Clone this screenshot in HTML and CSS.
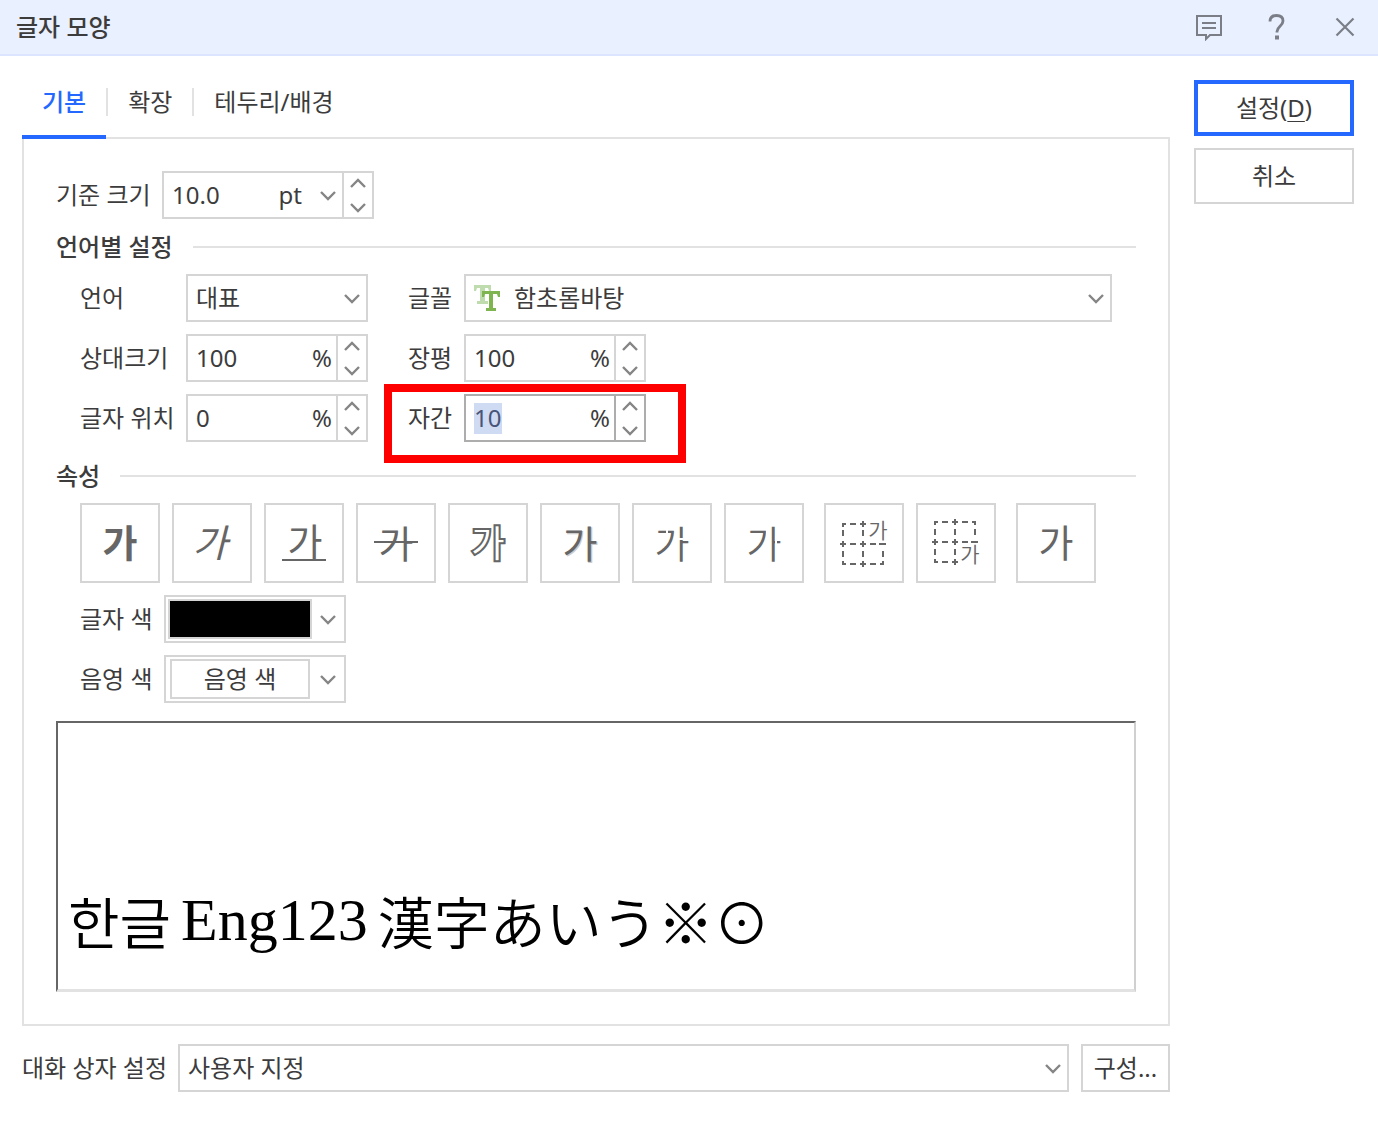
FILE: index.html
```html
<!DOCTYPE html>
<html lang="ko">
<head>
<meta charset="utf-8">
<meta name="viewport" content="width=device-width, initial-scale=1">
<title>글자 모양</title>
<link rel="stylesheet" href="styles.css">
</head>
<body>
<svg class="defs" aria-hidden="true">
  <symbol id="up" viewBox="0 0 18 12"><path d="M2 10 9 3l7 7" fill="none" stroke="#858585" stroke-width="2.4"/></symbol>
  <symbol id="down" viewBox="0 0 18 12"><path d="M2 3l7 7 7-7" fill="none" stroke="#858585" stroke-width="2.4"/></symbol>
</svg>

<header class="titlebar">
  <h1 class="title">글자 모양</h1>
  <div class="title-tools">
    <button class="tool" type="button" aria-label="의견">
      <svg width="28" height="28" viewBox="0 0 28 28" fill="none" stroke="#7b7e87" stroke-width="2"><path d="M2 3h24v19H15l-4 4v-4H2zM7 10h14M7 15h14"/></svg>
    </button>
    <button class="tool" type="button" aria-label="도움말">
      <svg width="28" height="28" viewBox="0 0 28 28" fill="none" stroke="#7b7e87" stroke-width="2.800"><path d="M7 8.500C7 4.500 9.500 2.500 13.500 2.500s6.500 2 6.500 5.500c0 5-6 5.500-6 10.500v1"/><path d="M12 24.500h4" stroke-width="4"/></svg>
    </button>
    <button class="tool" type="button" aria-label="닫기">
      <svg width="28" height="28" viewBox="0 0 28 28" fill="none" stroke="#7b7e87" stroke-width="2.200"><path d="M5.500 5.500l17 17m0-17l-17 17"/></svg>
    </button>
  </div>
</header>

<form class="dialog">
  <main class="main">
    <div class="tabs" role="tablist">
      <button class="tab active" type="button" role="tab" aria-selected="true">기본</button>
      <button class="tab" type="button" role="tab">확장</button>
      <button class="tab" type="button" role="tab">테두리/배경</button>
    </div>

    <section class="panel">
      <div class="size-row">
        <label for="size">기준 크기</label>
        <div class="spin spin-wide">
          <input id="size" type="text" value="10.0">
          <span class="unit">pt</span>
          <button class="drop" type="button" aria-label="크기 목록"><svg class="chev"><use href="#down"/></svg></button>
          <div class="steps">
            <button type="button" aria-label="크게"><svg class="chev"><use href="#up"/></svg></button>
            <button type="button" aria-label="작게"><svg class="chev"><use href="#down"/></svg></button>
          </div>
        </div>
      </div>

      <h2 class="legend">언어별 설정</h2>
      <div class="lang-grid">
        <div class="field">
          <label for="lang">언어</label>
          <select id="lang" class="select"><option>대표</option></select>
        </div>
        <div class="field">
          <label for="font">글꼴</label>
          <div class="select-icon">
            <svg width="28" height="28" viewBox="0 0 28 28"><path fill="#bfdcae" d="M1 1h17v6h-2l-1-3h-3v13h3v3H4v-3h3V4H4L3 7H1z"/><path fill="#7fb551" d="M9 7h18v6h-2l-1-3h-4v14h3v3H13v-3h3V10h-4l-1 3H9z"/></svg>
            <select id="font" class="select plain"><option>함초롬바탕</option></select>
          </div>
        </div>
        <div class="field">
          <label for="rel">상대크기</label>
          <div class="spin">
            <input id="rel" type="text" value="100"><span class="unit">%</span>
            <div class="steps">
              <button type="button" aria-label="상대크기 늘리기"><svg class="chev"><use href="#up"/></svg></button>
              <button type="button" aria-label="상대크기 줄이기"><svg class="chev"><use href="#down"/></svg></button>
            </div>
          </div>
        </div>
        <div class="field">
          <label for="ratio">장평</label>
          <div class="spin">
            <input id="ratio" type="text" value="100"><span class="unit">%</span>
            <div class="steps">
              <button type="button" aria-label="장평 늘리기"><svg class="chev"><use href="#up"/></svg></button>
              <button type="button" aria-label="장평 줄이기"><svg class="chev"><use href="#down"/></svg></button>
            </div>
          </div>
        </div>
        <div class="field">
          <label for="pos">글자 위치</label>
          <div class="spin">
            <input id="pos" type="text" value="0"><span class="unit">%</span>
            <div class="steps">
              <button type="button" aria-label="글자 위치 늘리기"><svg class="chev"><use href="#up"/></svg></button>
              <button type="button" aria-label="글자 위치 줄이기"><svg class="chev"><use href="#down"/></svg></button>
            </div>
          </div>
        </div>
        <div class="field marked">
          <label for="spacing">자간</label>
          <div class="spin current">
            <input id="spacing" type="text" value="10"><span class="unit">%</span>
            <div class="steps">
              <button type="button" aria-label="자간 늘리기"><svg class="chev"><use href="#up"/></svg></button>
              <button type="button" aria-label="자간 줄이기"><svg class="chev"><use href="#down"/></svg></button>
            </div>
          </div>
        </div>
      </div>

      <h2 class="legend attrs-legend">속성</h2>
      <div class="attrs">
        <div class="attr-group">
          <button class="attr" type="button" aria-label="진하게"><svg viewBox="0 0 76 76"><text class="ga bold" x="38" y="52">가</text></svg></button>
          <button class="attr" type="button" aria-label="기울임"><svg viewBox="0 0 76 76"><text class="ga italic" x="36" y="52">가</text></svg></button>
          <button class="attr" type="button" aria-label="밑줄"><svg viewBox="0 0 76 76"><text class="ga" x="39" y="51">가</text><path class="rule" d="M16 55h44"/></svg></button>
          <button class="attr" type="button" aria-label="취소선"><svg viewBox="0 0 76 76"><text class="ga" x="38" y="53">가</text><path class="rule" d="M16 37h44"/></svg></button>
          <button class="attr" type="button" aria-label="외곽선"><svg viewBox="0 0 76 76"><text class="ga outline" x="38" y="52">가</text></svg></button>
          <button class="attr" type="button" aria-label="그림자"><svg viewBox="0 0 76 76"><text class="ga medium soft" x="39" y="54">가</text><text class="ga" x="38" y="53">가</text></svg></button>
          <button class="attr" type="button" aria-label="양각"><svg viewBox="0 0 76 76"><text class="ga thin" x="38" y="53">가</text><path class="cut" d="M33 21v8M44 34h5"/></svg></button>
          <button class="attr" type="button" aria-label="음각"><svg viewBox="0 0 76 76"><text class="ga thin" x="38" y="53">가</text><path class="cut" d="M41 22v8M50 31v8"/></svg></button>
        </div>
        <div class="attr-group">
          <button class="attr" type="button" aria-label="위 첨자"><svg viewBox="0 0 76 76"><path class="dash" d="M17 22v-3h3M24 19h6M34 19h6M37 16v6M17 25v6M37 25v6M14 39h6M17 36v6M24 39h6M34 39h6M37 36v6M44 39h6M53 39h7M17 46v6M37 46v6M57 46v6M17 56v3h3M24 59h6M34 59h6M37 56v6M44 59h6M54 59h3v-3"/><text class="ga small" x="52" y="33">가</text></svg></button>
          <button class="attr" type="button" aria-label="아래 첨자"><svg viewBox="0 0 76 76"><path class="dash" d="M17 20v-3h3M24 17h6M34 17h6M37 14v6M44 17h6M54 17h3v3M17 24v6M37 24v6M57 24v6M14 37h6M17 34v6M24 37h6M34 37h6M37 34v6M44 37h6M53 37h7M17 44v6M37 44v6M17 54v3h3M24 57h6M34 57h6M37 54v6"/><text class="ga small" x="52" y="57">가</text></svg></button>
        </div>
        <button class="attr" type="button" aria-label="보통 모양"><svg viewBox="0 0 76 76"><text class="ga" x="38" y="52">가</text></svg></button>
      </div>

      <div class="colors">
        <div class="color-row">
          <label for="ink">글자 색</label>
          <button id="ink" class="picker" type="button"><span class="swatch black"></span><svg class="chev"><use href="#down"/></svg></button>
        </div>
        <div class="color-row">
          <label for="shade">음영 색</label>
          <button id="shade" class="picker" type="button"><span class="swatch none">음영 색</span><svg class="chev"><use href="#down"/></svg></button>
        </div>
      </div>

      <div class="preview"><span>한글</span><span class="latin">Eng123</span><span>漢字あいう※⊙</span></div>
    </section>

    <footer class="footer">
      <label for="preset">대화 상자 설정</label>
      <select id="preset" class="select"><option>사용자 지정</option></select>
      <button class="btn compact" type="button">구성...</button>
    </footer>
  </main>

  <aside class="actions">
    <button class="btn primary" type="button"><span>설정(<u>D</u>)</span></button>
    <button class="btn" type="button">취소</button>
  </aside>
</form>
</body>
</html>
```
FILE: styles.css
```css
* { box-sizing: border-box; }

body {
  margin: 0;
  background: #fff;
  color: #3c3c3c;
  font: 400 24px/32px "Noto Sans", "Noto Sans CJK KR", sans-serif;
}

button, input, select {
  margin: 0;
  padding: 0;
  border: 0;
  border-radius: 0;
  background: none;
  color: inherit;
  font: inherit;
}

.defs { display: none; }

.titlebar {
  display: flex;
  align-items: center;
  justify-content: space-between;
  height: 56px;
  padding: 0 19px 0 16px;
  background: #e9f0ff;
  border-bottom: 2px solid #dbe5ff;
}
.title { margin: 0; font-size: 24px; font-weight: 500; }
.title-tools { display: flex; gap: 40px; }
.tool { display: flex; }

.dialog {
  display: grid;
  grid-template-columns: 1fr 160px;
  gap: 24px;
  padding: 0 24px 28px 22px;
}

.actions {
  display: flex;
  flex-direction: column;
  gap: 12px;
  padding-top: 24px;
}
.btn { height: 56px; border: 2px solid #d5d5d5; background: #fff; }
.btn.primary { border: 4px solid #2468ff; }
.btn u { text-decoration-thickness: 1px; text-underline-offset: 4px; }
.btn.compact { width: 89px; height: 48px; }

.tabs { display: flex; height: 83px; margin-bottom: -2px; position: relative; }
.tab {
  display: flex;
  align-items: center;
  padding: 12px 20px 0;
  border-bottom: 4px solid transparent;
}
.tab + .tab::before {
  content: "";
  width: 2px;
  height: 28px;
  margin: 0 20px 0 -20px;
  background: #e2e2e2;
}
.tab.active { color: #2468ff; font-weight: 500; border-color: #2468ff; }

.panel { padding: 32px; border: 2px solid #e2e2e2; }

.size-row { display: flex; align-items: center; }
.size-row label { width: 106px; }

.spin {
  display: flex;
  align-items: center;
  width: 182px;
  height: 48px;
  border: 2px solid #d5d5d5;
}
.spin-wide { width: 212px; }
.spin.current, .spin.current .steps { border-color: #adadad; }
.spin input { flex: 1; min-width: 0; padding-left: 8px; }
.spin.current input {
  color: #485578;
  background: linear-gradient(#cfdaf3, #cfdaf3) 8px center / 28px 31px no-repeat;
}
.unit { padding-right: 4px; }
.spin-wide .unit { padding-right: 17px; }
.drop { display: flex; padding-right: 5px; }
.steps {
  display: flex;
  flex-direction: column;
  gap: 4px;
  align-self: stretch;
  width: 30px;
  border-left: 2px solid #d5d5d5;
}
.steps button { flex: 1; display: flex; align-items: center; justify-content: center; }
.chev { display: block; width: 18px; height: 12px; }

.legend {
  display: flex;
  align-items: center;
  gap: 20px;
  height: 55px;
  margin: 0;
  font-size: 24px;
  font-weight: 500;
}
.legend::after { content: ""; flex: 1; height: 2px; background: #e2e2e2; }
.attrs-legend { height: 61px; padding-top: 7px; }

.lang-grid {
  display: grid;
  grid-template-columns: 288px 1fr;
  gap: 12px 40px;
  padding: 0 24px;
}
.field { display: grid; grid-template-columns: 106px 1fr; align-items: center; }
.field:nth-child(even) { grid-template-columns: 56px 1fr; }

.select {
  flex: 1;
  width: 100%;
  min-width: 0;
  height: 48px;
  padding: 0 32px 0 8px;
  border: 2px solid #d5d5d5;
  appearance: none;
  background: #fff url("data:image/svg+xml,%3Csvg xmlns='http://www.w3.org/2000/svg' width='18' height='12'%3E%3Cpath d='M2 3l7 7 7-7' fill='none' stroke='%23858585' stroke-width='2.4'/%3E%3C/svg%3E") right 5px center no-repeat;
}
.select-icon {
  display: flex;
  align-items: center;
  height: 48px;
  padding-left: 7px;
  border: 2px solid #d5d5d5;
}
.select.plain { height: 44px; padding-left: 13px; border: 0; }

/* Callout drawn over the letter-spacing field */
.marked { position: relative; justify-self: start; }
.marked::after {
  content: "";
  position: absolute;
  inset: -10px -40px -21px -24px;
  border: 8px solid #f00;
  pointer-events: none;
}

.attrs { display: flex; gap: 20px; padding-left: 24px; }
.attr-group { display: flex; gap: 12px; }
.attr { width: 80px; height: 80px; border: 2px solid #d5d5d5; }
.attr svg { display: block; width: 76px; height: 76px; }
.ga {
  font-family: "Noto Sans CJK KR", sans-serif;
  font-size: 38px;
  text-anchor: middle;
  fill: #666;
}
.ga.bold { font-weight: 700; }
.ga.medium { font-weight: 500; }
.ga.thin { font-weight: 350; }
.ga.soft { fill: #ccc; }
.ga.italic { font-style: italic; }
.ga.outline { font-weight: 700; fill: #fff; stroke: #666; stroke-width: 2; }
.ga.small { font-size: 21px; font-weight: 350; }
.rule, .dash { fill: none; stroke: #666; stroke-width: 2; }
.cut { fill: none; stroke: #fff; stroke-width: 2; }

.colors { display: grid; gap: 12px; padding: 12px 24px 0; }
.color-row { display: flex; align-items: center; }
.color-row label { width: 84px; }
.picker {
  display: flex;
  align-items: center;
  justify-content: space-between;
  width: 182px;
  height: 48px;
  padding: 0 7px 0 2px;
  border: 2px solid #d5d5d5;
}
.swatch {
  display: flex;
  align-items: center;
  justify-content: center;
  width: 144px;
  height: 40px;
  border: 2px solid #d5d5d5;
}
.swatch.black { background: #000; }
.swatch.none { width: 140px; margin-left: 2px; }

.preview {
  display: flex;
  align-items: flex-end;
  gap: 10px;
  height: 271px;
  margin-top: 18px;
  padding: 0 10px 27px;
  border: 2px solid #666;
  border-right-color: #d0d0d0;
  border-bottom: 3px solid #e2e2e2;
  color: #000;
  font: 350 56px/84px "Noto Sans CJK KR", sans-serif;
}
.latin { font-family: "Liberation Serif", serif; font-size: 60px; }

.footer { display: flex; align-items: center; padding-top: 18px; }
.footer label { flex: none; width: 156px; }
.footer .btn { margin-left: 12px; }
```
